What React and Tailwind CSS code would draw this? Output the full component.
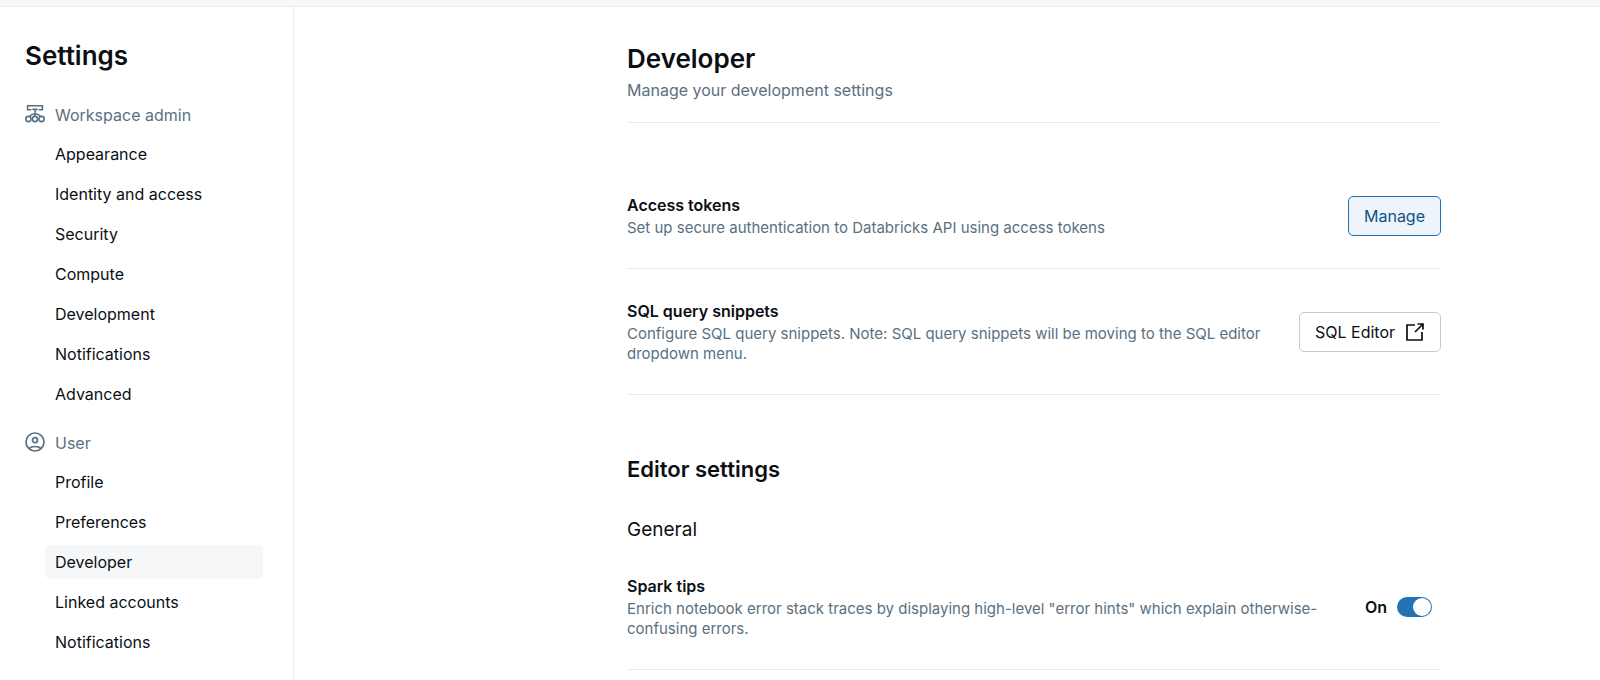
import React, { useState } from 'react';

const workspaceLinks = ['Appearance', 'Identity and access', 'Security', 'Compute', 'Development', 'Notifications', 'Advanced'];
const userLinks = ['Profile', 'Preferences', 'Developer', 'Linked accounts', 'Notifications'];

function WorkspaceIcon() {
  return (
    <svg className="w-5 h-5 shrink-0 mb-[3px]" viewBox="0 0 20 20" fill="none" stroke="currentColor" strokeWidth="1.6" aria-hidden="true">
      <path d="M6.4 5.8H2.6V1.8H17.4V5.8H13.6" />
      <path d="M7.4 5.4H12.6M10 5.4V12.2M4.4 12.6L7.2 10.2H12.8L15.6 12.6" />
      <circle cx="3.4" cy="15" r="2.6" />
      <circle cx="10" cy="15" r="2.6" />
      <circle cx="16.6" cy="15" r="2.6" />
    </svg>
  );
}

function UserIcon() {
  return (
    <svg className="w-5 h-5 shrink-0 mb-[3px]" viewBox="0 0 20 20" fill="none" stroke="currentColor" strokeWidth="1.7" aria-hidden="true">
      <circle cx="10" cy="10" r="9" />
      <circle cx="10" cy="8.2" r="2.5" />
      <path d="M4 16.4C5.6 15.1 7.6 14.5 10 14.5S14.4 15.1 16 16.4" />
    </svg>
  );
}

function NewWindowIcon() {
  return (
    <svg className="w-5 h-5 shrink-0" viewBox="0 0 20 20" fill="none" stroke="currentColor" strokeWidth="1.7" aria-hidden="true">
      <path d="M10 3H2V18H17V10" />
      <path d="M12.5 2H18V7.5M18 2L10 10" />
    </svg>
  );
}

function NavGroup({ icon, title, links, active }) {
  return (
    <div>
      <h2 className="flex items-center gap-[10px] h-[34px] mb-[5px] text-[#5a7080]">
        {icon}
        {title}
      </h2>
      <ul className="flex flex-col gap-[6px] ml-5">
        {links.map(link => (
          <li key={link}>
            <a
              href="#"
              className={`flex items-center h-[34px] px-[10px] rounded-[5px] ${link === active ? 'bg-[#f5f7f9]' : ''}`}
            >
              {link}
            </a>
          </li>
        ))}
      </ul>
    </div>
  );
}

function SettingRow({ title, text, children }) {
  return (
    <div className="flex items-center justify-between gap-8 py-[30px] border-b border-[#e8ecf0]">
      <div>
        <h4 className="font-semibold leading-6">{title}</h4>
        <p className="mt-px text-[15px] leading-5 text-[#5a7080]">{text}</p>
      </div>
      {children}
    </div>
  );
}

export default function App() {
  const [tips, setTips] = useState(true);

  return (
    <div className="flex flex-col min-h-screen bg-white text-[#0b0f14] text-base font-['Inter',sans-serif]">
      <div className="h-[7px] shrink-0 bg-[#f5f7f9] border-b border-[#e8ecf0]"></div>

      <div className="flex flex-1">
        {/* Sidebar */}
        <nav className="w-[294px] shrink-0 pl-[25px] pr-[30px] border-r border-[#e8ecf0]">
          <h1 className="mt-[33px] mb-[26px] text-[26px] leading-8 font-semibold">Settings</h1>
          <div className="flex flex-col gap-[15px]">
            <NavGroup icon={<WorkspaceIcon />} title="Workspace admin" links={workspaceLinks} />
            <NavGroup icon={<UserIcon />} title="User" links={userLinks} active="Developer" />
          </div>
        </nav>

        {/* Content */}
        <main className="flex-1 min-w-0 pl-[333px] pr-[159px]">
          <header className="pt-9 pb-5 border-b border-[#e8ecf0]">
            <h1 className="text-[26px] leading-8 font-semibold">Developer</h1>
            <p className="mt-[3px] leading-6 text-[#5a7080]">Manage your development settings</p>
          </header>

          <section className="pt-10">
            <SettingRow title="Access tokens" text="Set up secure authentication to Databricks API using access tokens">
              <button className="shrink-0 h-10 px-[15px] rounded-[5px] border border-[#2272b4] bg-[#eff4fa] text-[#0e538b]">Manage</button>
            </SettingRow>
            <SettingRow
              title="SQL query snippets"
              text="Configure SQL query snippets. Note: SQL query snippets will be moving to the SQL editor dropdown menu."
            >
              <button className="shrink-0 flex items-center gap-[10px] h-10 px-[15px] rounded-[5px] border border-[#c0cdd8]">
                SQL Editor
                <NewWindowIcon />
              </button>
            </SettingRow>
          </section>

          <section className="pt-[58px]">
            <h2 className="text-[22px] leading-8 font-semibold">Editor settings</h2>
            <h3 className="mt-[31px] text-[19px] leading-7">General</h3>
            <SettingRow
              title="Spark tips"
              text={'Enrich notebook error stack traces by displaying high-level "error hints" which explain otherwise-confusing errors.'}
            >
              <label className="flex items-center shrink-0 gap-[10px] mr-[9px] font-semibold">
                On
                <input
                  type="checkbox"
                  role="switch"
                  aria-label="Spark tips"
                  checked={tips}
                  onChange={(e) => setTips(e.target.checked)}
                  className="appearance-none flex items-center w-[35px] h-5 px-px rounded-full bg-[#8396a5] checked:bg-[#2272b4] checked:justify-end before:w-[18px] before:h-[18px] before:rounded-full before:bg-white"
                />
              </label>
            </SettingRow>
          </section>
        </main>
      </div>
    </div>
  );
}
